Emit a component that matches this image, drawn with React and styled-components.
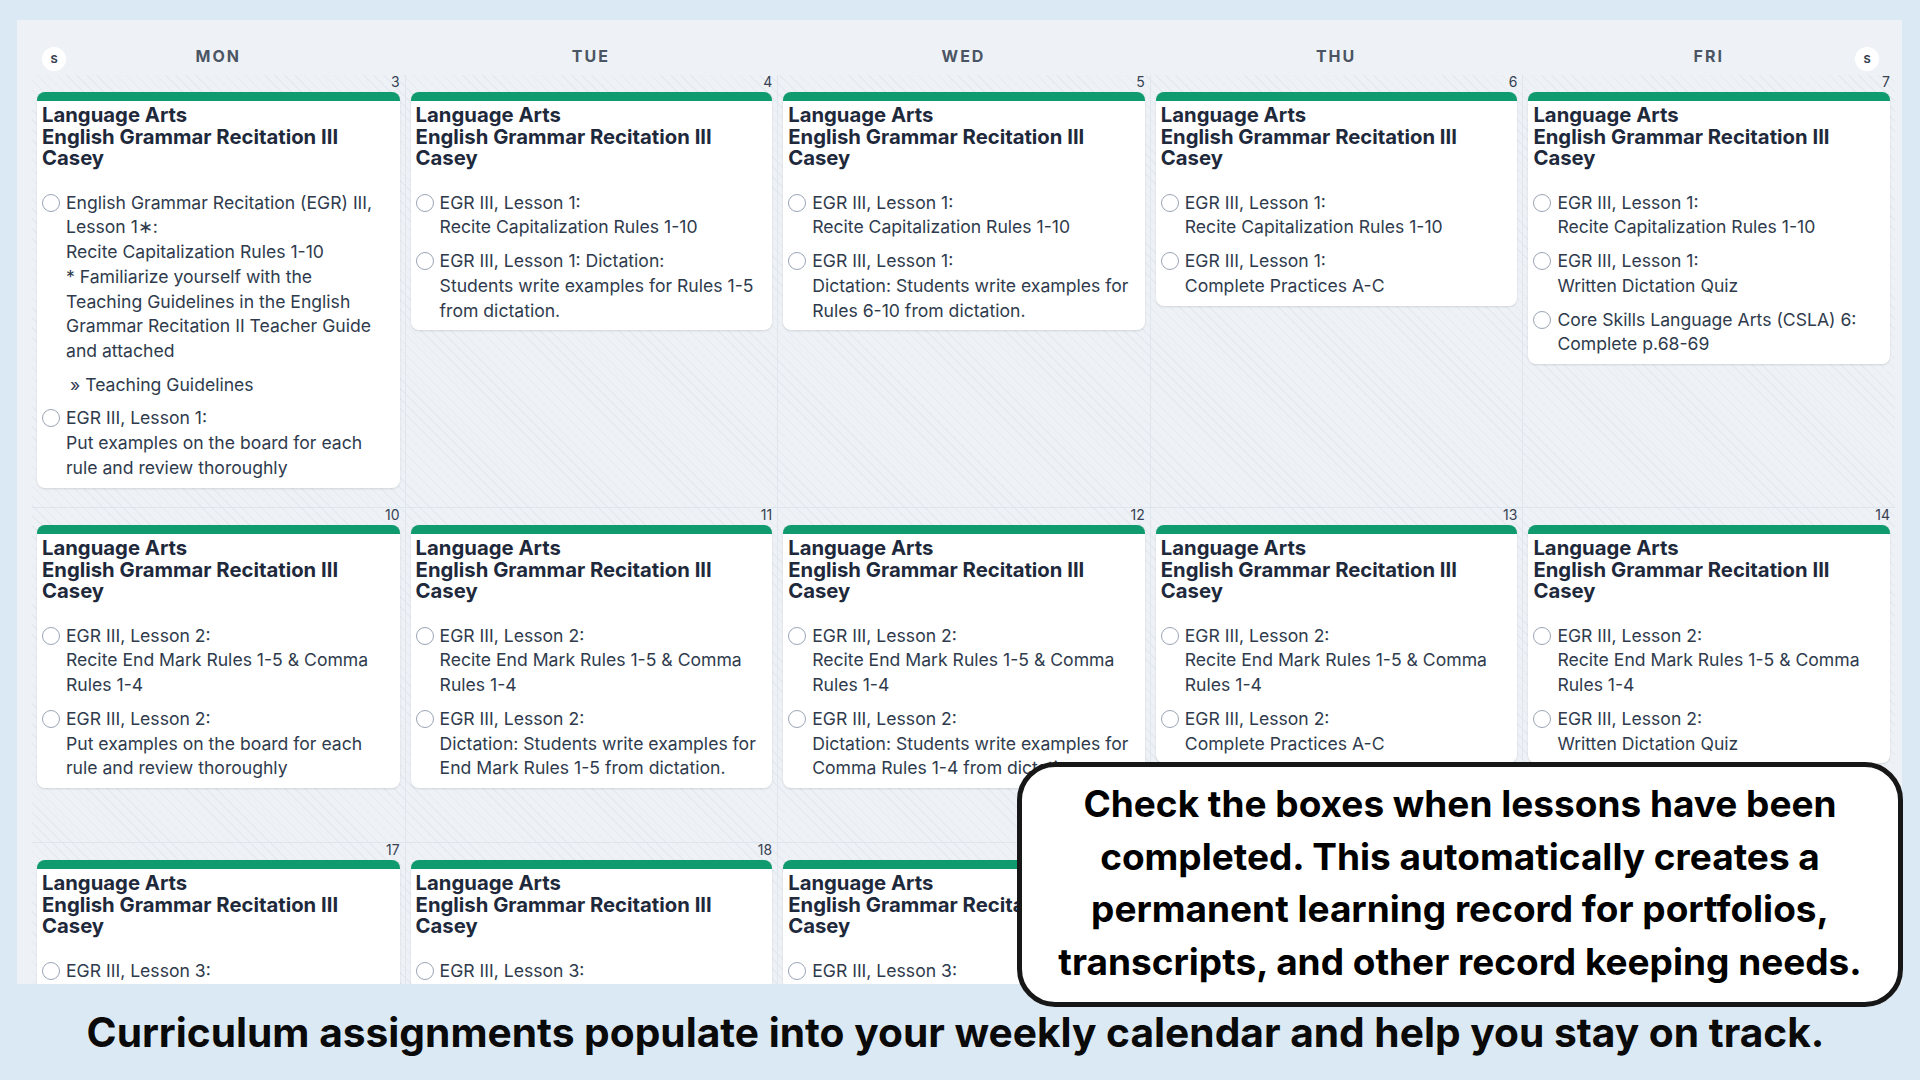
import React from 'react';
import styled, { createGlobalStyle } from 'styled-components';

const GlobalStyle = createGlobalStyle`
    html, body {
        margin: 0;
        padding: 0;
    }

    body {
        background: #dbe9f4;
        font-family: Inter, "Noto Sans", sans-serif;
        -webkit-font-smoothing: antialiased;
    }

    *, *::before, *::after {
        box-sizing: border-box;
    }
`;

const Page = styled.div`
    position: relative;
    width: 1920px;
    height: 1080px;
    display: flex;
    flex-direction: column;
    padding: 20px 18px 0 17px;
    overflow: hidden;
`;

const Calendar = styled.div`
    flex: none;
    height: 964px;
    padding: 0 7px 0 15px;
    background: #eef2f6;
    overflow: hidden;
`;

const DayHeader = styled.div`
    display: grid;
    grid-template-columns: repeat(5, 1fr);
    height: 55px;
`;

const HeaderCell = styled.div`
    position: relative;
    padding-top: 26px;
    text-align: center;
    font-size: 16px;
    line-height: 20px;
    font-weight: 700;
    letter-spacing: 2px;
    color: #4b5563;
`;

const WeekendToggle = styled.span`
    position: absolute;
    top: 27px;
    ${({ $side }) => ($side === 'left' ? 'left: 10px;' : 'right: 16px;')}
    width: 24px;
    height: 24px;
    border-radius: 50%;
    background: #fff;
    display: flex;
    align-items: center;
    justify-content: center;
    font-size: 11px;
    font-weight: 700;
    letter-spacing: 0;
    color: #374151;
`;

const Weeks = styled.div`
    background: repeating-linear-gradient(
        45deg,
        #eef2f6 0 6px,
        #e5eaf0 6px 7px
    );
`;

const WeekRow = styled.div`
    display: grid;
    grid-template-columns: repeat(5, 1fr);
    height: ${({ $height }) => ($height ? `${$height}px` : 'auto')};
    border-top: ${({ $first }) => ($first ? 'none' : '1px solid #dfe5ec')};
`;

const DayCell = styled.div`
    min-width: 0;
    padding: 0 5px;
    border-left: 1px solid #e0e6ed;

    &:first-child {
        border-left: none;
    }
`;

const DayNumber = styled.div`
    text-align: right;
    padding: 0 0 4px;
    font-size: 14px;
    line-height: 13px;
    color: #374151;
`;

const Card = styled.div`
    background: #fff;
    border-top: 9px solid #0f9b6e;
    border-radius: 8px;
    padding: 3px 5px 7px;
    box-shadow: 0 1px 2px rgba(15, 23, 42, 0.08), 0 1px 3px rgba(15, 23, 42, 0.05);
`;

const CardTitle = styled.div`
    font-size: 20.3px;
    line-height: 21.6px;
    font-weight: 700;
    color: #1e293b;

    span {
        display: block;
    }
`;

const TaskList = styled.div`
    margin-top: 22px;
    display: flex;
    flex-direction: column;
    gap: 9px;
`;

const Task = styled.div`
    display: flex;
    align-items: flex-start;
    gap: 6px;
`;

const CheckCircle = styled.span`
    flex: none;
    width: 18px;
    height: 18px;
    margin-top: 3px;
    border-radius: 50%;
    border: 1.5px solid #9aa5b4;
    background: #fff;
`;

const TaskText = styled.div`
    font-size: 17.6px;
    line-height: 24.7px;
    color: #2f3b4d;
    white-space: pre-line;
`;

const TaskLink = styled.div`
    margin-top: 9px;
    padding-left: 4px;
`;

const Caption = styled.div`
    flex: 1;
    display: flex;
    align-items: center;
    justify-content: center;
    padding-right: 8px;
    font-size: 40.7px;
    font-weight: 700;
    color: #0a0a0a;
`;

const Callout = styled.div`
    position: absolute;
    left: 1017px;
    top: 762px;
    width: 886px;
    height: 245px;
    padding-top: 11px;
    border: 5px solid #171717;
    border-radius: 38px;
    background: #fff;
    text-align: center;
    font-size: 37px;
    line-height: 52.5px;
    font-weight: 700;
    color: #000;
`;

const DAYS = ['MON', 'TUE', 'WED', 'THU', 'FRI'];

const SECOND_LESSON = 'EGR III, Lesson 2:\nRecite End Mark Rules 1-5 & Comma\nRules 1-4';
const FIRST_LESSON = 'EGR III, Lesson 1:\nRecite Capitalization Rules 1-10';

const weeks = [
    {
        height: 432,
        days: [
            {
                date: 3,
                tasks: [
                    {
                        text: 'English Grammar Recitation (EGR) III,\nLesson 1\u2217:\nRecite Capitalization Rules 1-10\n* Familiarize yourself with the\nTeaching Guidelines in the English\nGrammar Recitation II Teacher Guide\nand attached',
                        link: '\u00bb Teaching Guidelines',
                    },
                    { text: 'EGR III, Lesson 1:\nPut examples on the board for each\nrule and review thoroughly' },
                ],
            },
            {
                date: 4,
                tasks: [
                    { text: FIRST_LESSON },
                    { text: 'EGR III, Lesson 1: Dictation:\nStudents write examples for Rules 1-5\nfrom dictation.' },
                ],
            },
            {
                date: 5,
                tasks: [
                    { text: FIRST_LESSON },
                    { text: 'EGR III, Lesson 1:\nDictation: Students write examples for\nRules 6-10 from dictation.' },
                ],
            },
            {
                date: 6,
                tasks: [
                    { text: FIRST_LESSON },
                    { text: 'EGR III, Lesson 1:\nComplete Practices A-C' },
                ],
            },
            {
                date: 7,
                tasks: [
                    { text: FIRST_LESSON },
                    { text: 'EGR III, Lesson 1:\nWritten Dictation Quiz' },
                    { text: 'Core Skills Language Arts (CSLA) 6:\nComplete p.68-69' },
                ],
            },
        ],
    },
    {
        height: 335,
        days: [
            {
                date: 10,
                tasks: [
                    { text: SECOND_LESSON },
                    { text: 'EGR III, Lesson 2:\nPut examples on the board for each\nrule and review thoroughly' },
                ],
            },
            {
                date: 11,
                tasks: [
                    { text: SECOND_LESSON },
                    { text: 'EGR III, Lesson 2:\nDictation: Students write examples for\nEnd Mark Rules 1-5 from dictation.' },
                ],
            },
            {
                date: 12,
                tasks: [
                    { text: SECOND_LESSON },
                    { text: 'EGR III, Lesson 2:\nDictation: Students write examples for\nComma Rules 1-4 from dictation.' },
                ],
            },
            {
                date: 13,
                tasks: [
                    { text: SECOND_LESSON },
                    { text: 'EGR III, Lesson 2:\nComplete Practices A-C' },
                ],
            },
            {
                date: 14,
                tasks: [
                    { text: SECOND_LESSON },
                    { text: 'EGR III, Lesson 2:\nWritten Dictation Quiz' },
                ],
            },
        ],
    },
    {
        days: [17, 18, 19, 20, 21].map((date) => ({
            date,
            tasks: [{ text: 'EGR III, Lesson 3:' }],
        })),
    },
];

function LessonCard({ tasks }) {
    return (
        <Card>
            <CardTitle>
                <span>Language Arts</span>
                <span>English Grammar Recitation III</span>
                <span>Casey</span>
            </CardTitle>
            <TaskList>
                {tasks.map((task, i) => (
                    <Task key={i}>
                        <CheckCircle />
                        <TaskText>
                            {task.text}
                            {task.link && <TaskLink>{task.link}</TaskLink>}
                        </TaskText>
                    </Task>
                ))}
            </TaskList>
        </Card>
    );
}

function App() {
    return (
        <>
            <GlobalStyle />
            <Page>
                <Calendar>
                    <DayHeader>
                        {DAYS.map((day, i) => (
                            <HeaderCell key={day}>
                                {i === 0 && <WeekendToggle $side="left">S</WeekendToggle>}
                                {day}
                                {i === DAYS.length - 1 && <WeekendToggle $side="right">S</WeekendToggle>}
                            </HeaderCell>
                        ))}
                    </DayHeader>
                    <Weeks>
                        {weeks.map((week, w) => (
                            <WeekRow key={w} $first={w === 0} $height={week.height}>
                                {week.days.map((day) => (
                                    <DayCell key={day.date}>
                                        <DayNumber>{day.date}</DayNumber>
                                        <LessonCard tasks={day.tasks} />
                                    </DayCell>
                                ))}
                            </WeekRow>
                        ))}
                    </Weeks>
                </Calendar>
                <Caption>
                    Curriculum assignments populate into your weekly calendar and help you stay on track.
                </Caption>
                <Callout>
                    Check the boxes when lessons have been
                    <br />
                    completed. This automatically creates a
                    <br />
                    permanent learning record for portfolios,
                    <br />
                    transcripts, and other record keeping needs.
                </Callout>
            </Page>
        </>
    );
}

export default App;
